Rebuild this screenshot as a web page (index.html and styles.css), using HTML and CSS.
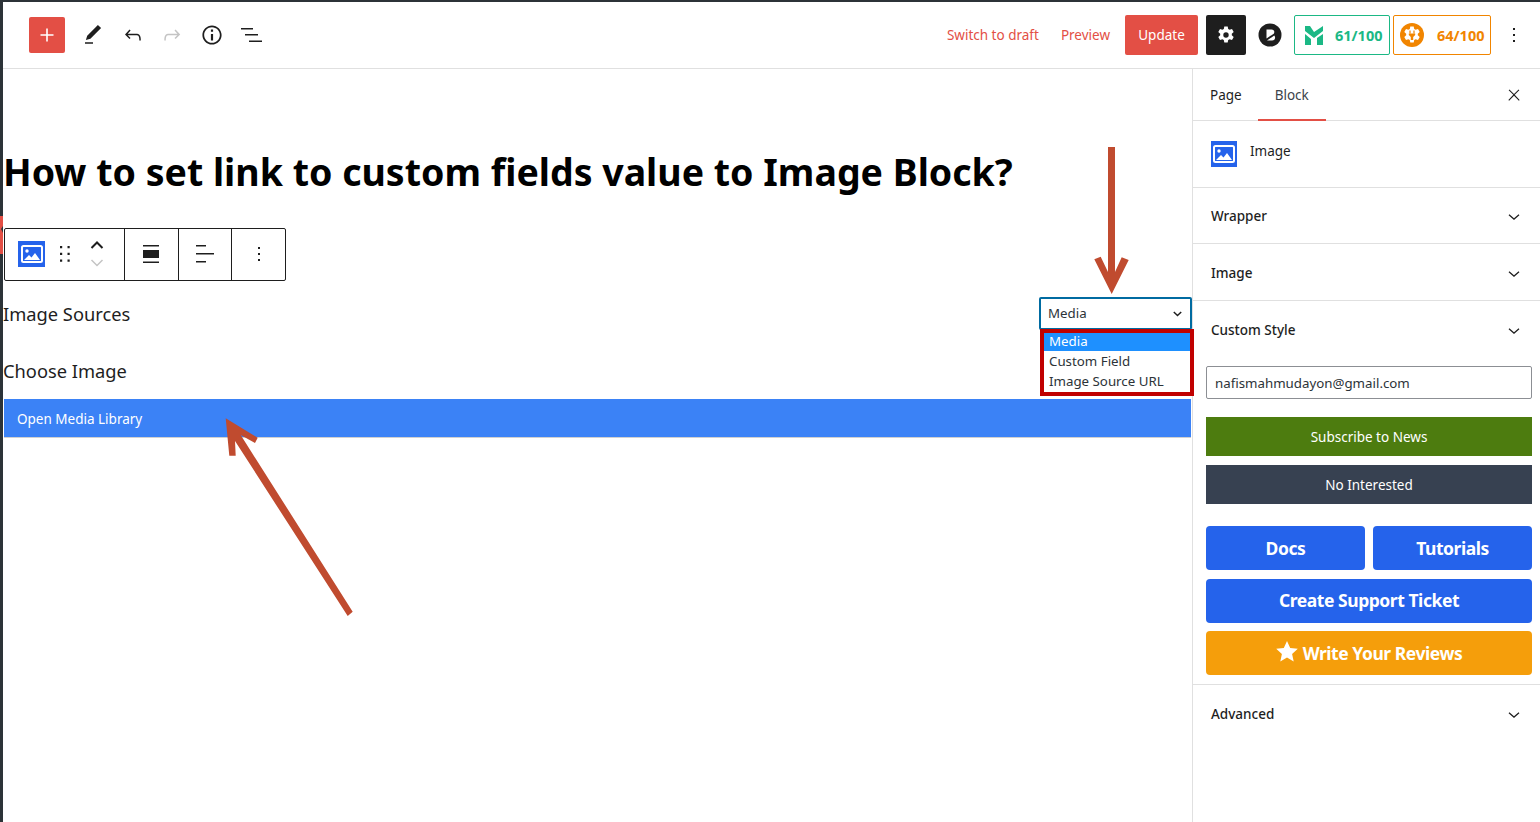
FILE: index.html
```html
<!DOCTYPE html>
<html lang="en">
<head>
    <meta charset="UTF-8">
    <title>Edit Page</title>
    <link rel="stylesheet" href="styles.css">
</head>
<body>
    <div class="app">
        <header class="topbar">
            <div class="topbar-left">
                <button class="add-btn">
                    <svg width="16" height="16" viewBox="0 0 16 16"><path d="M7.200 1.500h1.600v5.700h5.700v1.600H8.800v5.700H7.200V8.800H1.500V7.200h5.700z" fill="#fff"/></svg>
                </button>
                <svg class="tool" width="24" height="24" viewBox="0 0 24 24"><path d="M20.100 5.100 16.900 2 6.200 12.700l-1.300 4.400 4.500-1.300zM4 20.800h8v-1.500H4z" fill="#1e1e1e"/></svg>
                <svg class="tool" width="24" height="24" viewBox="0 0 24 24"><path d="M18.300 11.700c-.6-.6-1.400-.9-2.300-.9H6.700l2.900-3.300-1.100-1-4.500 5L8.500 16l1-1-2.700-2.700H16c.5 0 .9.2 1.300.5 1 1 1 3.400 1 4.500v.3h1.500v-.2c0-1.500 0-4.300-1.500-5.700z" fill="#1e1e1e"/></svg>
                <svg class="tool" width="24" height="24" viewBox="0 0 24 24"><path d="M15.600 6.500l-1.100 1 2.900 3.300H8c-.9 0-1.700.3-2.300.9-1.400 1.500-1.400 4.200-1.400 5.600v.2h1.500v-.3c0-1.100 0-3.500 1-4.500.3-.3.7-.5 1.300-.5h9.200L14.500 15l1.100 1.100 4.600-4.600z" fill="#c4c4c4"/></svg>
                <svg class="tool" width="24" height="24" viewBox="1 1 22 22"><path d="M12 3.200c-4.800 0-8.800 3.900-8.800 8.800 0 4.800 3.900 8.800 8.800 8.800 4.800 0 8.800-3.900 8.800-8.800 0-4.800-4-8.800-8.800-8.800zm0 16c-4 0-7.200-3.300-7.200-7.200C4.800 8 8 4.800 12 4.800s7.200 3.300 7.200 7.200c0 4-3.200 7.200-7.200 7.200zM11 17h2v-6h-2v6zm0-8h2V7h-2v2z" fill="#1e1e1e"/></svg>
                <svg class="tool" width="24" height="24" viewBox="0 0 24 24"><path d="M2 5h12v1.500H2zM6 11h13v1.500H6zM10 17.500h13V19H10z" fill="#1e1e1e"/></svg>
            </div>
            <div class="topbar-right">
                <a class="link draft-link">Switch to draft</a>
                <a class="link preview-link">Preview</a>
                <button class="update-btn">Update</button>
                <button class="settings-btn">
                    <svg width="24" height="24" viewBox="0 0 24 24"><path fill-rule="evenodd" d="M10.300 3.500h3.400l.5 2.500 1.400.8 2.400-.8 1.700 3-1.900 1.700v1.600l1.900 1.700-1.700 3-2.400-.8-1.400.8-.5 2.500h-3.400l-.5-2.500-1.400-.8-2.400.8-1.700-3 1.900-1.700v-1.600L4.300 9l1.700-3 2.400.8 1.400-.8zM12 9.300a2.700 2.700 0 1 0 0 5.400 2.700 2.700 0 0 0 0-5.400z" fill="#fff"/></svg>
                </button>
                <svg class="brand-icon" width="24" height="24" viewBox="0 0 24 24">
                    <circle cx="12" cy="12" r="11.500" fill="#1e1e1e"/>
                    <path d="M8.500 6.500h5c1.800 0 2.800 1.100 2.800 2.600 0 .7-.2 1.200-.6 1.600L8.500 15.500z" fill="#fff"/>
                    <path d="M16.300 12.500c.5.600.8 1.200.8 2 0 1.800-1.200 3-3 3H9z" fill="#fff"/>
                </svg>
                <div class="score score-green">
                    <svg width="18" height="19" viewBox="0 0 18 19"><path d="M0 0h5l4 6 9-6v5L9 12 0 5z" fill="#1bb885"/><path d="M0 8l6 5v6H0zM18 8v11h-6v-7z" fill="#1bb885"/></svg>
                    <span>61/100</span>
                </div>
                <div class="score score-orange">
                    <svg width="24" height="24" viewBox="0 0 24 24">
                        <circle cx="12" cy="12" r="12" fill="#f18500"/>
                        <path d="M10.300 3.500h3.400l.5 2.500 1.400.8 2.400-.8 1.700 3-1.900 1.700v1.600l1.900 1.700-1.700 3-2.400-.8-1.400.8-.5 2.500h-3.400l-.5-2.500-1.400-.8-2.400.8-1.700-3 1.900-1.700v-1.600L4.300 9l1.700-3 2.400.8 1.400-.8z" fill="#fff"/>
                        <path d="M10 7.500v3M14 7.500v3" stroke="#f18500" stroke-width="1.200"/>
                        <path d="M8.800 10.500h6.400V12l-2 2v3h-2.400v-3l-2-2z" fill="#f18500"/>
                    </svg>
                    <span>64/100</span>
                </div>
                <svg class="more" width="24" height="24" viewBox="0 0 24 24"><path d="M13 19h-2v-2h2v2zm0-6h-2v-2h2v2zm0-6h-2V5h2v2z" fill="#1e1e1e"/></svg>
            </div>
        </header>

        <div class="layout">
            <main class="editor">
                <h1 class="post-title">How to set link to custom fields value to Image Block?</h1>

                <div class="block-toolbar">
                    <div class="tb-group tb-first">
                        <span class="image-icon">
                            <svg width="22" height="18" viewBox="0 0 22 18"><rect x="1" y="1" width="20" height="16" rx="1.500" fill="none" stroke="#fff" stroke-width="2"/><circle cx="6" cy="6" r="1.700" fill="#fff"/><path d="M3 15l5-5 2.500 2.500L14 8l5 7z" fill="#fff"/></svg>
                        </span>
                        <svg class="drag" width="10" height="16" viewBox="0 0 10 16"><path d="M0 0h2.200v2.200H0zM7.500 0h2.200v2.200H7.500zM0 6.800h2.200V9H0zM7.500 6.800h2.200V9H7.500zM0 13.600h2.200v2.200H0zM7.500 13.600h2.200v2.200H7.500z" fill="#1e1e1e"/></svg>
                        <div class="movers">
                            <svg width="14" height="8" viewBox="0 0 14 8"><path d="M1.500 7 7 1.500 12.500 7" fill="none" stroke="#1e1e1e" stroke-width="2"/></svg>
                            <svg width="14" height="8" viewBox="0 0 14 8"><path d="M1.500 1 7 6.500 12.500 1" fill="none" stroke="#c4c4c4" stroke-width="1.500"/></svg>
                        </div>
                    </div>
                    <div class="tb-group tb-align">
                        <svg width="16" height="18" viewBox="0 0 16 18"><path d="M0 0h16v1.500H0zM0 5h16v8H0zM0 16.500h16V18H0z" fill="#1e1e1e"/></svg>
                    </div>
                    <div class="tb-group tb-text">
                        <svg width="18" height="18" viewBox="0 0 18 18"><path d="M0 0h10v1.500H0zM0 8h18v1.500H0zM0 16h10v1.500H0z" fill="#1e1e1e"/></svg>
                    </div>
                    <div class="tb-group tb-more">
                        <svg width="24" height="24" viewBox="0 0 24 24"><path d="M13 19h-2v-2h2v2zm0-6h-2v-2h2v2zm0-6h-2V5h2v2z" fill="#1e1e1e"/></svg>
                    </div>
                </div>

                <div class="field-row">
                    <label class="field-label">Image Sources</label>
                    <div class="select-box">
                        <span>Media</span>
                        <svg width="9" height="6" viewBox="0 0 9 6"><path d="M.8 1 4.500 4.500 8.200 1" fill="none" stroke="#1e1e1e" stroke-width="1.500"/></svg>
                        <ul class="select-menu">
                            <li class="selected">Media</li>
                            <li>Custom Field</li>
                            <li>Image Source URL</li>
                        </ul>
                    </div>
                </div>
                <div class="field-row choose-row">
                    <label class="field-label">Choose Image</label>
                </div>
                <button class="media-btn">Open Media Library</button>
            </main>

            <aside class="sidebar">
                <div class="tabs">
                    <span class="tab tab-page">Page</span>
                    <span class="tab tab-active">Block</span>
                    <svg class="close" width="24" height="24" viewBox="0 0 24 24"><path d="M13 11.800l6.100-6.300-1-1-6.100 6.200-6.100-6.200-1 1 6.100 6.300-6.500 6.700 1 1 6.500-6.600 6.500 6.600 1-1z" fill="#1e1e1e" transform="translate(3 3) scale(.75)"/></svg>
                </div>
                <div class="block-card">
                    <span class="image-icon image-icon-big">
                        <svg width="22" height="18" viewBox="0 0 22 18"><rect x="1" y="1" width="20" height="16" rx="1.500" fill="none" stroke="#fff" stroke-width="2"/><circle cx="6" cy="6" r="1.700" fill="#fff"/><path d="M3 15l5-5 2.500 2.500L14 8l5 7z" fill="#fff"/></svg>
                    </span>
                    <span class="block-name">Image</span>
                </div>
                <div class="panel panel-wrapper"><span>Wrapper</span><svg width="20" height="20" viewBox="0 0 24 24"><path d="M17.500 10l-5.500 4.800L6.500 10l-1 1.100 6.500 5.700 6.500-5.700z" fill="#1e1e1e"/></svg></div>
                <div class="panel panel-image"><span>Image</span><svg width="20" height="20" viewBox="0 0 24 24"><path d="M17.500 10l-5.500 4.800L6.500 10l-1 1.100 6.500 5.700 6.500-5.700z" fill="#1e1e1e"/></svg></div>
                <div class="custom-style">
                    <div class="panel panel-custom"><span>Custom Style</span><svg width="20" height="20" viewBox="0 0 24 24"><path d="M17.500 10l-5.500 4.800L6.500 10l-1 1.100 6.500 5.700 6.500-5.700z" fill="#1e1e1e"/></svg></div>
                    <input class="email-input" type="text" value="nafismahmudayon@gmail.com">
                    <button class="news-btn subscribe">Subscribe to News</button>
                    <button class="news-btn no-thanks">No Interested</button>
                    <div class="help-grid">
                        <button class="help-btn">Docs</button>
                        <button class="help-btn">Tutorials</button>
                        <button class="help-btn wide ticket">Create Support Ticket</button>
                        <button class="help-btn wide review">
                            <svg width="22" height="21" viewBox="0 0 22 21"><path d="M11 0l3.200 7 7.600.8-5.700 5.100 1.600 7.500L11 16.600l-6.700 3.800 1.600-7.500L.2 7.800 7.800 7z" fill="#fff"/></svg>
                            Write Your Reviews
                        </button>
                    </div>
                </div>
                <div class="panel panel-advanced"><span>Advanced</span><svg width="20" height="20" viewBox="0 0 24 24"><path d="M17.500 10l-5.500 4.800L6.500 10l-1 1.100 6.500 5.700 6.500-5.700z" fill="#1e1e1e"/></svg></div>
            </aside>
        </div>

        <!-- red arrows drawn over the screenshot -->
        <svg class="arrows" width="1540" height="822" viewBox="0 0 1540 822">
            <polygon fill="#e34f45" points="0,216 3,216 3,226 1,229 3,233 3,254 0,254"/>
            <polygon fill="#c04b2f" points="1094.300,259.300 1100.700,256.700 1108,272 1108,147 1115,147 1115,272 1121.700,257.300 1128.700,260 1111.700,294"/>
            <polygon fill="#c04b2f" points="225.700,418.300 257.700,437.700 255,443 240.700,435 352.700,611.700 347.700,616 235,441 235.700,455.700 229.300,455.700"/>
        </svg>
    </div>
</body>
</html>
```

FILE: styles.css
```css
* {
    box-sizing: border-box;
}
html, body {
    margin: 0;
    height: 100%;
    overflow: hidden;
}
body {
    font-family: "Noto Sans", "Open Sans", Arial, sans-serif;
    font-size: 13.5px;
    color: #1e1e1e;
    background: #2c3338;
}
button {
    font-family: inherit;
    border: none;
    cursor: pointer;
}
.app {
    position: relative;
    height: 822px;
    margin: 2px 0 0 3px;
    background: #fff;
    display: flex;
    flex-direction: column;
}

/* top bar */
.topbar {
    height: 67px;
    flex: none;
    display: flex;
    justify-content: space-between;
    align-items: center;
    border-bottom: 1px solid #e0e0e0;
    padding: 0 14px 0 26px;
}
.topbar-left {
    display: flex;
    align-items: center;
}
.tool {
    margin-left: 16px;
}
.tool + .tool {
    margin-left: 15.5px;
}
.add-btn {
    width: 36px;
    height: 36px;
    background: #e34f45;
    border-radius: 2px;
    padding: 0;
    display: flex;
    align-items: center;
    justify-content: center;
}
.topbar-right {
    display: flex;
    align-items: center;
}
.link {
    color: #e34f45;
    font-size: 13.5px;
}
.draft-link {
    margin-right: 22px;
}
.preview-link {
    margin-right: 15px;
}
.update-btn {
    width: 73px;
    height: 40px;
    padding: 0;
    background: #e34f45;
    color: #fff;
    font-size: 13.5px;
    border-radius: 2px;
    margin-right: 8px;
}
.settings-btn {
    width: 40px;
    height: 40px;
    background: #1e1e1e;
    border-radius: 2px;
    padding: 0;
    display: flex;
    align-items: center;
    justify-content: center;
}
.brand-icon {
    margin: 0 12px;
    width: 24px;
}
.score {
    height: 40px;
    border-radius: 2px;
    display: flex;
    align-items: center;
    font-weight: 700;
    font-size: 14.5px;
}
.score span {
    margin-bottom: 1px;
}
.score-green {
    width: 96px;
    margin-right: 3px;
    border: 1px solid #1bb885;
    color: #1bb885;
    padding-left: 10px;
    gap: 12px;
}
.score-orange {
    width: 98px;
    border: 1px solid #f18500;
    color: #f18500;
    padding-left: 6px;
    gap: 13px;
}
.more {
    margin-left: 11px;
}

/* layout */
.layout {
    flex: 1;
    display: flex;
    min-height: 0;
}
.editor {
    width: 1189px;
    flex: none;
    padding-top: 78px;
    position: relative;
}
.post-title {
    margin: 0;
    font-size: 37.5px;
    line-height: 50px;
    font-weight: 700;
    color: #000;
    white-space: nowrap;
}

/* block toolbar */
.block-toolbar {
    display: flex;
    width: 282px;
    height: 53px;
    margin: 31px 0 0 1px;
    border: 1px solid #1e1e1e;
    border-radius: 2px;
    background: #fff;
}
.tb-group {
    display: flex;
    align-items: center;
    justify-content: center;
    padding-bottom: 1px;
    border-right: 1px solid #1e1e1e;
}
.tb-first {
    width: 120px;
    justify-content: flex-start;
    padding-left: 13px;
}
.tb-align {
    width: 54px;
    padding-right: 1px;
}
.tb-text {
    width: 53px;
}
.tb-more {
    flex: 1;
    border-right: none;
}
.image-icon {
    width: 27px;
    height: 26px;
    background: #2563eb;
    display: flex;
    align-items: center;
    justify-content: center;
}
.drag {
    margin-left: 15px;
}
.movers {
    display: flex;
    flex-direction: column;
    gap: 10px;
    margin-left: 20px;
}

/* fields */
.field-row {
    display: flex;
    justify-content: space-between;
    align-items: center;
    height: 33px;
    margin-top: 16px;
}
.choose-row {
    height: 32px;
    margin-top: 24px;
}
.field-label {
    font-size: 18.3px;
    color: #1e1e1e;
}
.select-box {
    position: relative;
    width: 153px;
    height: 33px;
    border: 2px solid #006ba1;
    border-radius: 2px;
    display: flex;
    align-items: center;
    justify-content: space-between;
    padding: 0 8px 0 7px;
    font-size: 13.3px;
    color: #2c3338;
}
.select-box > span {
    margin-bottom: 2px;
}
.select-menu {
    position: absolute;
    top: 30px;
    left: -1px;
    width: 154px;
    margin: 0;
    padding: 0 0 1px;
    list-style: none;
    background: #fff;
    border: 4px solid #c00000;
    font-size: 13.3px;
    z-index: 2;
}
.select-menu li {
    padding-left: 5px;
    height: 20px;
    line-height: 20px;
}
.select-menu li.selected {
    height: 18px;
    line-height: 17px;
    background: #1e90ff;
    color: #fff;
}
.media-btn {
    display: block;
    width: 1187px;
    height: 39px;
    margin: 13px 0 0 1px;
    padding: 1px 0 0 13px;
    text-align: left;
    background: #3b82f6;
    border-bottom: 1px solid #d0d0d0;
    color: #fff;
    font-size: 13.5px;
}

/* sidebar */
.sidebar {
    flex: 1;
    border-left: 1px solid #e0e0e0;
    min-width: 0;
}
.tabs {
    height: 52px;
    display: flex;
    align-items: flex-start;
    border-bottom: 1px solid #e0e0e0;
}
.tab {
    height: 52px;
    line-height: 53px;
    padding: 0 17px;
}
.tab-page {
    padding-right: 16px;
}
.tab-active {
    color: #3c434a;
    width: 68px;
    border-bottom: 2px solid #e34f45;
}
.close {
    align-self: center;
    margin-left: auto;
    margin-right: 14px;
}
.block-card {
    height: 67px;
    padding: 20px 0 0 18px;
    display: flex;
    align-items: flex-start;
    border-bottom: 1px solid #e0e0e0;
}
.image-icon-big {
    width: 26px;
    height: 26px;
}
.block-name {
    margin-left: 13px;
    line-height: 20px;
}
.panel {
    display: flex;
    justify-content: space-between;
    align-items: center;
    padding: 0 16px 0 18px;
    font-weight: 500;
}
.panel-wrapper {
    height: 56px;
    border-bottom: 1px solid #e0e0e0;
}
.panel-image {
    height: 57px;
    padding-top: 1px;
    border-bottom: 1px solid #e0e0e0;
}
.panel-custom {
    height: 57px;
    padding-left: 5px;
    padding-right: 0;
    margin-right: 8px;
}
.panel-advanced {
    height: 58px;
}
.custom-style {
    padding: 0 8px 8px 13px;
    border-bottom: 1px solid #e0e0e0;
    height: 384px;
}
.email-input {
    display: block;
    width: 100%;
    height: 33px;
    margin-top: 8px;
    padding: 0 8px;
    border: 1px solid #8c8f94;
    border-radius: 2px;
    font-family: inherit;
    font-size: 13.3px;
    color: #2c3338;
}
.news-btn {
    display: block;
    width: 100%;
    height: 39px;
    color: #fff;
    font-size: 13.5px;
}
.subscribe {
    margin-top: 18px;
    background: #4d7c0f;
}
.no-thanks {
    margin-top: 9px;
    background: #374151;
}
.help-grid {
    display: grid;
    grid-template-columns: 1fr 1fr;
    gap: 9px 8px;
    margin-top: 22px;
}
.help-btn {
    height: 44px;
    padding: 0;
    background: #2563eb;
    color: #fff;
    font-size: 17.5px;
    font-weight: 700;
    letter-spacing: -.45px;
    border-radius: 4px;
    display: flex;
    align-items: center;
    justify-content: center;
    gap: 5px;
}
.ticket {
    padding-bottom: 2px;
}
.wide {
    grid-column: span 2;
}
.review {
    margin-top: -1px;
    background: #f59e0b;
}
.review svg {
    margin-bottom: 4px;
}

/* arrows on top of the page */
.arrows {
    position: absolute;
    top: -2px;
    left: -3px;
    pointer-events: none;
    z-index: 5;
}
```
